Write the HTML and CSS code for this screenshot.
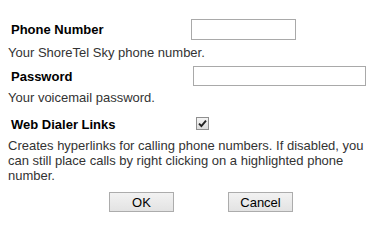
FILE: index.html
```html
<!DOCTYPE html>
<html>
<head>
<meta charset="utf-8">
<link rel="stylesheet" href="styles.css">
</head>
<body>
<form class="settings">
  <div class="row row-phone">
    <label class="label label-phone" for="phone">Phone Number</label>
    <input class="field field-phone" id="phone" type="text">
  </div>
  <p class="desc desc-phone">Your ShoreTel Sky phone number.</p>

  <div class="row row-pass">
    <label class="label label-pass" for="pass">Password</label>
    <input class="field field-pass" id="pass" type="password">
  </div>
  <p class="desc desc-pass">Your voicemail password.</p>

  <div class="row row-dialer">
    <label class="label label-dialer" for="dialer">Web Dialer Links</label>
    <span class="check" id="dialer" role="checkbox" aria-checked="true">
      <svg width="9" height="9" viewBox="0 0 9 9"><path d="M1 4.6 L3.4 7 L8 1.6" fill="none" stroke="#222" stroke-width="1.9"/></svg>
    </span>
  </div>
  <p class="desc desc-dialer">Creates hyperlinks for calling phone numbers. If disabled, you can still place calls by right clicking on a highlighted phone number.</p>

  <div class="buttons">
    <button type="button" class="btn btn-ok">OK</button>
    <button type="button" class="btn btn-cancel">Cancel</button>
  </div>
</form>
</body>
</html>
```
FILE: styles.css
```css
html, body {
  margin: 0;
  padding: 0;
  background: #ffffff;
}
body {
  font-family: Arial, "Liberation Sans", sans-serif;
  font-size: 13px;
  line-height: 15px;
  color: #000;
}
.settings {
  padding: 19px 0 0 8px;
  width: 360px;
}
.row {
  display: flex;
  align-items: center;
}
.label {
  font-weight: bold;
  padding-left: 3px;
  color: #000;
}
.label-phone { width: 180px; }
.label-pass { width: 182px; }
.label-dialer { width: 185px; }
.field {
  box-sizing: border-box;
  border: 1px solid #a9a9a9;
  margin: 0;
  padding: 0 2px;
  font: inherit;
  background: #fff;
}
.field-phone { width: 105px; height: 21px; }
.field-pass { width: 173px; height: 20px; }
.row-pass { margin-top: 6px; }
.row-dialer { margin-top: 12px; }
.check {
  box-sizing: border-box;
  width: 13px;
  height: 13px;
  border: 1px solid #8f8f8f;
  background: linear-gradient(#f4f4f4, #dcdcdc);
  display: flex;
  align-items: center;
  justify-content: center;
  margin-top: -2px;
}
.desc {
  margin: 5px 0 0 0;
  color: #333;
}
.desc-pass { margin-top: 4px; }
.desc-dialer { margin-top: 6px; padding-right: 4px; }
.buttons {
  display: flex;
  gap: 54px;
  padding-left: 101px;
  margin-top: 9px;
}
.btn {
  box-sizing: border-box;
  width: 65px;
  height: 20px;
  padding: 0;
  border: 1px solid #acacac;
  border-radius: 0;
  background: linear-gradient(#f2f2f2, #e3e3e3);
  font-family: Arial, "Liberation Sans", sans-serif;
  font-size: 13px;
  color: #000;
}
```
